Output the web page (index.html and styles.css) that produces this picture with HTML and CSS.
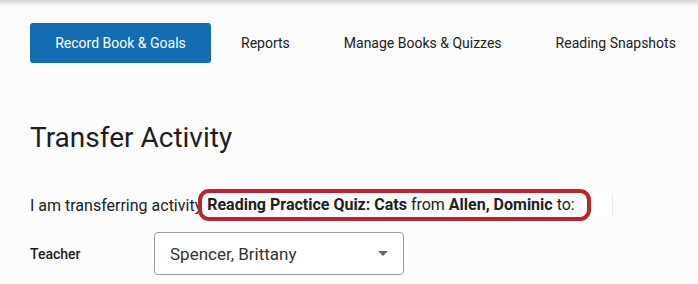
FILE: index.html
```html
<!DOCTYPE html>
<html lang="en">
<head>
<meta charset="utf-8">
<title>Transfer Activity</title>
<link rel="stylesheet" href="styles.css">
</head>
<body>
<div class="shade"></div>
<nav class="nav">
  <a class="nav-btn" href="#">Record Book &amp; Goals</a>
  <a class="nav-link" href="#">Reports</a>
  <a class="nav-link" href="#">Manage Books &amp; Quizzes</a>
  <a class="nav-link" href="#">Reading Snapshots</a>
</nav>
<main class="main">
  <h1 class="title">Transfer Activity</h1>
  <p class="sentence">I am transferring activity<span class="highlight"><b>Reading Practice Quiz: Cats</b> from <b>Allen, Dominic</b> to:</span><span class="ghost"></span></p>
  <div class="field">
    <label class="field-label">Teacher</label>
    <div class="select">
      <span class="select-value">Spencer, Brittany</span>
      <span class="caret"></span>
    </div>
  </div>
</main>
</body>
</html>
```
FILE: styles.css
```css
html, body {
  margin: 0;
  padding: 0;
}
body {
  background: #fcfcfc;
  font-family: Roboto, "Liberation Sans", Arial, sans-serif;
  color: #212121;
  width: 698px;
  height: 284px;
  overflow: hidden;
}
.shade {
  height: 6px;
  background: linear-gradient(to bottom, rgba(0,0,0,0.16), rgba(0,0,0,0));
}
.nav {
  display: flex;
  align-items: center;
  padding: 17px 0 0 30px;
}
.nav a {
  flex-shrink: 0;
  text-decoration: none;
  font-size: 14px;
  color: #212121;
  white-space: nowrap;
}
.nav-btn {
  display: flex;
  align-items: center;
  justify-content: center;
  width: 181px;
  height: 40px;
  box-sizing: border-box;
  background: #146db2;
  color: #fff !important;
  border-radius: 3px;
  margin-right: 3px;
}
.nav-link {
  padding: 0 27px;
}
.main {
  padding: 0 30px;
}
.title {
  font-size: 28px;
  font-weight: 400;
  margin: 57px 0 0;
  line-height: 36px;
  color: #1e1e1e;
}
.sentence {
  font-size: 16px;
  margin: 33px 0 0;
  display: flex;
  align-items: center;
  height: 32px;
  white-space: nowrap;
}
.highlight {
  border: 4px solid #b5272d;
  border-radius: 11px;
  padding: 2px 12px 2px 5px;
  height: 20px;
  line-height: 20px;
  margin-left: -4px;
}
.highlight b {
  font-weight: 700;
}
.ghost {
  width: 22px;
  height: 22px;
  margin-left: 4px;
  background: #fff;
  box-shadow: inset -4px 0 0 #fff, inset -5px 0 0 #e6e6e6;
}
.field {
  display: flex;
  align-items: center;
  margin-top: 11px;
}
.field-label {
  width: 124px;
  font-size: 14px;
  font-weight: 500;
  color: #1e1e1e;
}
.select {
  width: 250px;
  height: 43px;
  box-sizing: border-box;
  border: 1px solid #9a9a9a;
  border-radius: 4px;
  background: #fff;
  display: flex;
  align-items: center;
  justify-content: space-between;
  padding: 0 15px 0 15px;
}
.select-value {
  font-size: 17px;
  color: #333;
}
.caret {
  width: 0;
  height: 0;
  border-left: 5px solid transparent;
  border-right: 5px solid transparent;
  border-top: 5px solid #666;
}
```
